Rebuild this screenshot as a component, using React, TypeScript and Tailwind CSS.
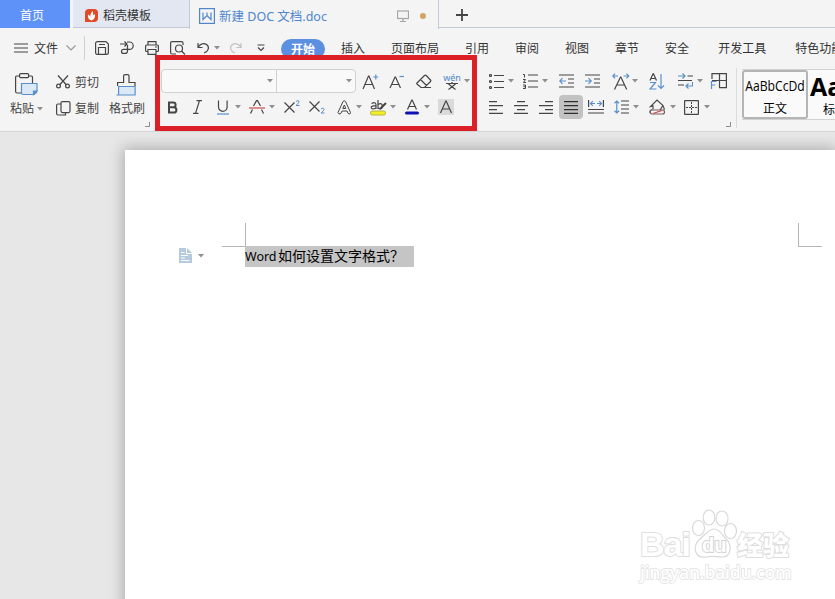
import React from "react";

interface IGlyph {
  w: number;
  h: number;
  className?: string;
  stroke?: string;
  children: React.ReactNode;
}

const BLUE = "#5b8fc9";

function Glyph({ w, h, className = "", stroke = "#454545", children }: IGlyph) {
  return (
    <svg
      width={w}
      height={h}
      viewBox={`0 0 ${w} ${h}`}
      fill="none"
      stroke={stroke}
      strokeWidth={1.2}
      className={"shrink-0 " + className}
    >
      {children}
    </svg>
  );
}

function Caret({ className = "" }: { className?: string }) {
  return (
    <svg width="6" height="4" viewBox="0 0 6 4" className={"shrink-0 -mr-px " + className}>
      <path d="M0 0h6L3 3.500z" fill="#8f8f8f" />
    </svg>
  );
}

function Launcher({ className = "" }: { className?: string }) {
  return (
    <Glyph w={5} h={5} className={className} stroke="#8c8c8c">
      <path d="M4.5 0v4.5H0" strokeWidth="1" />
    </Glyph>
  );
}

const menus = [
  { name: "插入", cls: "ml-4" },
  { name: "页面布局", cls: "ml-[26px]" },
  { name: "引用", cls: "ml-[26px]" },
  { name: "审阅", cls: "ml-[26px]" },
  { name: "视图", cls: "ml-[26px]" },
  { name: "章节", cls: "ml-[26px]" },
  { name: "安全", cls: "ml-[26px]" },
  { name: "开发工具", cls: "ml-[29px]" },
  { name: "特色功能", cls: "ml-[29px]" },
];

function TabBar() {
  return (
    <div className="flex h-[29px] bg-[#f4f4f4]">
      <div className="w-[70px] h-[28px] pr-[6px] pt-[3px] bg-[#5f92f8] text-white flex items-center justify-center">首页</div>
      <div className="w-[116px] h-[28px] ml-[3px] pl-[11px] pt-[3px] bg-[#e3e7f1] border-b border-[#c3c9d6] flex items-center">
        <svg width="15" height="15" viewBox="0 0 15 15">
          <path d="M5 1h5q4 0 4 4v5q0 4-4 4H1V5q0-4 4-4z" fill="#e04a24" />
          <path d="M7.6 12.5C4 11.5 3.8 9 4 6.5c1.2.6 2 1.3 2.2 2.2C6.4 6.5 7 4.4 8.8 3c.5 2 .4 3.300-.1 4.700.6-.8 1.200-1.200 2.300-1.500.2 3-.4 5.200-3.400 6.300z" fill="#fff" />
        </svg>
        <span className="ml-[4px] pt-[2px] text-[#333]">稻壳模板</span>
      </div>
      <div className="w-[250px] h-[29px] pl-[10px] pt-[3px] border-l border-r border-[#c3c9d6] flex items-center text-[#4f86cc]">
        <Glyph w={16} h={16} stroke="#4f86cc" className="-ml-px">
          <rect x=".6" y=".6" width="14.8" height="14.800" />
          <path d="M4 4.500v7l4-4 4 4v-7M8 4.500v3" />
        </Glyph>
        <span className="ml-[4px] pt-px w-[110px] whitespace-nowrap text-[12.500px]">新建 DOC 文档.doc</span>
        <Glyph w={12} h={12} stroke="#a6a6a6" className="ml-[68px]">
          <rect x=".5" y="1" width="11" height="7.500" />
          <path d="M6 8.500v3M3 11.500h6" />
        </Glyph>
        <i className="ml-[11px] size-[6px] rounded-full bg-[#d3a463]" />
      </div>
      <div className="flex-1 h-[28px] pl-[17px] pt-[3px] border-b border-[#c3c9d6] flex items-center">
        <Glyph w={12} h={12}>
          <path d="M6 0v12M0 6h12" strokeWidth="1.800" />
        </Glyph>
      </div>
    </div>
  );
}

function MenuBar() {
  return (
    <div className="flex h-[38px] items-center pl-[14px] whitespace-nowrap text-[#333]">
      <Glyph w={14} h={10}>
        <path d="M0 1h14M0 5h14M0 9h14" />
      </Glyph>
      <span className="ml-[6px] pt-[2px]">文件</span>
      <Glyph w={10} h={6} className="ml-[8px]" stroke="#999">
        <path d="M.5 .5L5 5 9.500 .5" />
      </Glyph>
      <i className="ml-[8px] w-px h-[24px] shrink-0 bg-[#cfcfcf]" />
      {/* save, export, print, preview */}
      <Glyph w={14} h={14} className="ml-[10px]">
        <path d="M2.500 .6h8.500l2.400 2.400v8.500q0 1.900-1.900 1.900h-9Q.6 13.400 .6 11.500v-9Q.6.6 2.500.6zM3.500 13V6.500h7V13M4 3.500h6" />
      </Glyph>
      <Glyph w={14} h={14} className="ml-[11px]">
        <path d="M0 3h7M4.500 .5L7 3 4.500 5.500M7 1h2.500a3.700 3.700 0 0 1 0 7.400H3.500a1.500 1.500 0 0 0 0 4H5q2.500 0 2.500-2.500V4" />
      </Glyph>
      <Glyph w={14} h={14} className="ml-[11px]">
        <path d="M3 4V.6h8V4M3 10.500H1.500Q.6 10.500 .6 9.500V5q0-1 1-1h10.800q1 0 1 1v4.500q0 1-1 1H11M3 8.500h8v4.900H3zM10 6h2" />
      </Glyph>
      <Glyph w={16} h={14} className="ml-[11px]">
        <path d="M6 13H2Q.6 13 .6 11.500V2Q.6.6 2 .6h9.500Q13 .6 13 2v2M11.500 10l3.500 3.500" />
        <circle cx="9" cy="7.500" r="3.500" />
      </Glyph>
      <Glyph w={13} h={12} className="ml-[11px]">
        <path d="M1 1v4.500h4.500M1 5.500C3.500 1.500 7 1 9.500 2.500c3.500 2.500 2 7-2.500 8.500" />
      </Glyph>
      <Caret className="ml-[4px]" />
      <Glyph w={13} h={12} className="ml-[10px]" stroke="#c2c2c2">
        <path d="M12 1v4.500H7.500M12 5.500C9.500 1.500 6 1 3.500 2.500 0 5 1.500 9.500 6 11" />
      </Glyph>
      <Glyph w={8} h={8} className="ml-[15px]">
        <path d="M.5 1h7M1 3.500l3 3 3-3" />
      </Glyph>
      <span className="ml-[16px] mt-[2px] w-[44px] h-[20px] pt-px shrink-0 rounded-full bg-[#5b8fe0] text-white font-bold flex items-center justify-center">
        开始
      </span>
      {menus.map((item) => {
        return (
          <span key={item.name} className={item.cls + " pt-[2px] shrink-0"}>
            {item.name}
          </span>
        );
      })}
    </div>
  );
}

function Clipboard() {
  return (
    <div className="flex w-[161px] h-[65px] pl-[10px] text-[#444]">
      <div className="w-[34px]">
        <Glyph w={23} h={23} className="ml-[5px] mt-[6px]">
          <path d="M5 3H1.500q-.9 0-.9 1v14.500q0 1.500 1.500 1.500H6M13 3h3.500q1 0 1 1v6" />
          <rect x="4.600" y=".6" width="9" height="4" rx="1" />
          <path d="M6.500 10.500H22V18q-1 3-4 3.500H8q-1.500 0-1.500-1.500z" fill="#dbe8f6" stroke={BLUE} />
          <path d="M22 18h-3.500v3.500z" fill={BLUE} stroke={BLUE} />
        </Glyph>
        <div className="mt-[4px] h-[18px] flex items-center whitespace-nowrap">
          粘贴 <Caret className="ml-[3px]" />
        </div>
      </div>
      <div className="w-[44px] ml-[12px]">
        <div className="flex h-[26px] items-center mt-[2px]">
          <Glyph w={14} h={14}>
            <path d="M2 .5L10.500 10M12 .5L3.500 10" />
            <circle cx="2.500" cy="11" r="1.900" />
            <circle cx="11.500" cy="11" r="1.900" />
          </Glyph>
          <span className="ml-[5px] pt-px">剪切</span>
        </div>
        <div className="flex h-[26px] items-center">
          <Glyph w={15} h={15}>
            <rect x="5" y=".6" width="9" height="11" rx="1.500" />
            <path d="M5 3H2Q.6 3 .6 4.500v8Q.6 14 2 14h7.500v-2.500" />
          </Glyph>
          <span className="ml-[4px] pt-px">复制</span>
        </div>
      </div>
      <div className="w-[37px] ml-[9px]">
        <Glyph w={21} h={22} className="ml-[7px] mt-[7px]">
          <path d="M1.600 12V8.500h6V2q0-1.400 1.400-1.400h2.600Q13 .6 13 2v6.500h6V12" />
          <path d="M2.600 12.500h16.500V21H.5h2.100z" fill="#dbe8f6" stroke={BLUE} />
        </Glyph>
        <div className="mt-[4px] h-[18px] flex items-center whitespace-nowrap">格式刷</div>
      </div>
      <Launcher className="mt-[55px] -ml-px" />
    </div>
  );
}

function FontGroup() {
  return (
    <div className="w-[328px] h-[65px] pt-px">
      <div className="flex h-[26px] items-center">
        <div className="flex w-[195px] h-[24px] rounded-[4px] border border-[#d0d0d0] bg-[#f9f9f9]">
          <div className="flex w-[115px] items-center justify-end pr-[4px] border-r border-[#d0d0d0]">
            <Caret />
          </div>
          <div className="flex flex-1 items-center justify-end pr-[4px]">
            <Caret />
          </div>
        </div>
        <Glyph w={17} h={17} className="ml-[6px]">
          <path d="M1 16L6.500 3h.5l5.500 13M3 11.500h7.500" />
          <path d="M13.800 1.500v5M11.300 4h5" stroke={BLUE} />
        </Glyph>
        <Glyph w={16} h={15} className="ml-[10px]">
          <path d="M1 14L6 3h.5l5 11M2.500 10.500H9.500" />
          <path d="M10.500 2.500H15" stroke={BLUE} />
        </Glyph>
        <Glyph w={16} h={15} className="ml-[11px]">
          <path d="M1 9L8.500 1.500Q9.300 .7 10.200 1.500L14.500 6q.7.8 0 1.500L8.500 13.500H5L1 10q-.5-.5 0-1zM4.500 5.500l6 6M5 13.500h10" />
        </Glyph>
        <div className="ml-[11px] mt-px w-[18px] flex flex-col items-center">
          <span className="text-[9px] leading-[7px] text-[#4f86c4]">wén</span>
          <Glyph w={12} h={8} className="mt-px">
            <path d="M0 1.500h12M6 0v1.500M2.500 2l7 5.500M9.500 2l-7 5.500" />
          </Glyph>
        </div>
        <Caret className="ml-[3px]" />
      </div>
      <div className="flex h-[26px] items-center pl-[6px]">
        <Glyph w={11} h={13}>
          <path d="M2 1.500h4.200a2.400 2.400 0 0 1 0 4.800H2zM2 6.300h4.800a2.600 2.600 0 0 1 0 5.200H2z" strokeWidth="2" />
        </Glyph>
        <Glyph w={9} h={14} className="ml-[15px]">
          <path d="M3.500 .6H9M0 13.400h5.500M6.500 .6l-4 12.800" />
        </Glyph>
        <Glyph w={12} h={15} className="ml-[15px]">
          <path d="M1.500 .5v6.500a4.300 4.300 0 0 0 8.600 0V.5" />
          <path d="M0 14h12" stroke={BLUE} />
        </Glyph>
        <Caret className="ml-[6px]" />
        <Glyph w={16} h={14} className="ml-[9px]">
          <path d="M4.500 6L7.500 .6h1L11.500 6M3.500 9.500l-2 4M12.500 9.500l2 4" />
          <path d="M0 8h16" stroke="#c94a4a" />
        </Glyph>
        <Caret className="ml-[4px]" />
        <Glyph w={16} h={14} className="ml-[10px]">
          <path d="M.5 2.500l10 10M10.500 2.500l-10 10" />
          <path d="M12 1.500q3-2 3 .5 0 1-3 3.500h3.500" stroke={BLUE} strokeWidth="1" />
        </Glyph>
        <Glyph w={16} h={14} className="ml-[9px]">
          <path d="M.5 1.500l10 10M10.500 1.500l-10 10" />
          <path d="M12 9q3-2 3 .5 0 1-3 3.500h3.500" stroke={BLUE} strokeWidth="1" />
        </Glyph>
        <Glyph w={15} h={15} className="ml-[12px]">
          <path d="M1 12.500L6 1.500q1.200-1.500 2.500 0l5 11q.2 1.500-1.500 1.500-1 0-2-3H5q-1 3-2 3-2 0-2-1.500zM5.800 8.500h3L7.300 5z" strokeWidth="1" />
        </Glyph>
        <Caret className="ml-[4px]" />
        <Glyph w={17} h={17} className="ml-[9px]">
          <rect x=".5" y="12" width="15" height="4" rx="1.800" fill="#f4ee28" stroke="#a8a432" strokeWidth=".8" />
          <path d="M1.500 4.500q4-2 4.500 1V10M6 7Q1.200 6.500 1.200 8.500 1.500 11 6 9M8 1v9M8 6q2-2.500 4-.5 1.500 4-2 4.500L8 9" />
          <path d="M16 4l-5 5-1.500 1" strokeWidth="2" />
        </Glyph>
        <Caret className="ml-[3px]" />
        <Glyph w={14} h={16} className="ml-[10px]">
          <path d="M2.500 10.500L6.800 1h.4l4.300 9.500M4 7.500h6" />
          <rect x="0" y="12.500" width="14" height="3" rx="1.500" fill="#1212b4" stroke="none" />
        </Glyph>
        <Caret className="ml-[5px]" />
        <Glyph w={16} h={16} className="ml-[9px] bg-[#dadada]">
          <path d="M2.500 14L7.800 2h.4l5.300 12M4.500 10h7" />
        </Glyph>
      </div>
    </div>
  );
}

function ParagraphGroup() {
  return (
    <div className="w-[247px] h-[65px] pt-px">
      <div className="flex h-[26px] items-center">
        <Glyph w={15} h={15}>
          <path d="M5 1.500h10M5 7.500h10M5 13.500h10" />
          <circle cx="1.500" cy="1.500" r="1" />
          <circle cx="1.500" cy="7.500" r="1" />
          <circle cx="1.500" cy="13.500" r="1" />
        </Glyph>
        <Caret className="ml-[4px]" />
        <Glyph w={15} h={16} className="ml-[10px]">
          <path d="M5 2h10M5 8h10M5 14h10" />
          <path d="M0 1.500h1.500v3M0 6.500h2.500L.5 9.500h2.500M0 12h2.500v3.500H0M.5 13.700h2" strokeWidth="1" />
        </Glyph>
        <Caret className="ml-[4px]" />
        <Glyph w={15} h={14} className="ml-[12px]">
          <path d="M0 1h15M9 5h6M9 9h6M0 13h15" />
          <path d="M.8 7H7M3.500 4.200L.8 7l2.700 2.800" stroke={BLUE} />
        </Glyph>
        <Glyph w={15} h={14} className="ml-[11px]">
          <path d="M0 1h15M9 5h6M9 9h6M0 13h15" />
          <path d="M0 7h6.200M3.500 4.200L6.200 7 3.500 9.800" stroke={BLUE} />
        </Glyph>
        <Glyph w={18} h={17} className="ml-[12px]">
          <path d="M2.500 16.500L8.500 4h.4l5.800 12.500M5 12h7.500" />
          <path d="M.8 3H6M3 .6L.8 3 3 5.400M11.500 3h5.200M14.500 .6L16.700 3l-2.200 2.400" stroke={BLUE} />
        </Glyph>
        <Caret className="ml-[2px]" />
        <Glyph w={16} h={17} className="ml-[12px]">
          <path d="M1 7.500L4 .8h.5l3 6.700M2 5.500h4.500" />
          <path d="M1 9.500h5.500L1 16h6.500M12 1v14.500M9 12.500l3 3 3-3" stroke={BLUE} />
        </Glyph>
        <Glyph w={15} h={16} className="ml-[13px]">
          <path d="M9.500 3H15M0 7.500h14M0 12h6" />
          <path d="M0 3h7M4.500 .5L7 3 4.500 5.500M14.500 9v4H8M10.500 10.500L8 13l2.500 2.500" stroke={BLUE} />
        </Glyph>
        <Caret className="ml-[4px]" />
        <Glyph w={17} h={16} className="ml-[8px]">
          <path d="M2 6V.6h14.400v14H9M9.500 .6v14M2 7.500h14.400" />
          <path d="M6.500 8.500h-5V16M1.500 12h4" stroke={BLUE} />
        </Glyph>
      </div>
      <div className="flex h-[26px] items-center">
        <Glyph w={14} h={13}>
          <path d="M0 .6h8M0 4.600h14M0 8.600h8M0 12.400h14" />
        </Glyph>
        <Glyph w={14} h={13} className="ml-[11px]">
          <path d="M3 .6h8M0 4.600h14M3 8.600h8M0 12.400h14" />
        </Glyph>
        <Glyph w={14} h={13} className="ml-[11px]">
          <path d="M6 .6h8M0 4.600h14M6 8.600h8M0 12.400h14" />
        </Glyph>
        <div className="ml-[6px] w-[24px] h-[24px] rounded-[4px] bg-[#c2c2c2] flex items-center justify-center">
          <Glyph w={14} h={13} stroke="#2e2e2e">
            <path d="M0 .6h14M0 4.600h14M0 8.600h14M0 12.400h14" />
          </Glyph>
        </div>
        <Glyph w={16} h={14} className="ml-[5px]">
          <path d="M.6 0v7M15.400 0v7M0 9.500h16M0 13h16" />
          <path d="M2.500 3.500h4.500M4.800 1.200L2.500 3.500l2.300 2.300M9 3.500h4.500M11.200 1.200l2.300 2.300-2.300 2.300" stroke={BLUE} />
        </Glyph>
        <Glyph w={15} h={14} className="ml-[10px]">
          <path d="M7 1h8M7 5h8M7 9h8M7 13h8" />
          <path d="M2.800 1v12M.5 3.200L2.800 1l2.300 2.200M.5 10.800L2.800 13l2.300-2.200" stroke={BLUE} />
        </Glyph>
        <Caret className="ml-[4px]" />
        <Glyph w={17} h={16} className="ml-[11px]">
          <path d="M4 10.500V7L1.500 7.500 8 1l6 5.500-3 4.500M2.500 10.500Q.5 12 1.500 14M14 7q1.500 2 1 4" />
          <rect x="1" y="11" width="14.500" height="4" rx="2" stroke="#7a5c5c" />
          <path d="M4 14.500l9-3" stroke="#c94a4a" />
        </Glyph>
        <Caret className="ml-[4px]" />
        <Glyph w={15} h={15} className="ml-[9px]">
          <rect x=".6" y=".6" width="13.800" height="13.800" rx=".5" />
          <path d="M7.500 2v11M2 7.500h11" strokeWidth="1" strokeDasharray="2 1" />
        </Glyph>
        <Caret className="ml-[5px]" />
      </div>
      <Launcher className="ml-[237px] mt-[2px]" />
    </div>
  );
}

function StyleGallery() {
  return (
    <div className="flex flex-1 min-w-0 pt-px">
      <div className="flex w-[93px] h-[51px] mt-px ml-[5px] shrink-0 border-y border-[#d2d2d2] bg-[#fafafa] text-black">
        <div className="w-[66px] h-[49px] shrink-0 rounded-[3px] border-2 border-[#b5b5b5] text-center whitespace-nowrap">
          <div className="mt-[5px] -mx-2 text-[14px] leading-[18px] font-['Open_Sans'] scale-x-[.87]">AaBbCcDd</div>
          <div className="mt-[6px] leading-[16px]">正文</div>
        </div>
        <div className="ml-[2px] w-[25px] shrink-0 overflow-hidden whitespace-nowrap">
          <div className="text-[25px] font-bold leading-[32px] font-['Open_Sans']">Aa</div>
          <div className="ml-[13px] leading-[16px]">标</div>
        </div>
      </div>
    </div>
  );
}

function Watermark() {
  return (
    <div className="absolute left-[640px] top-[377px] w-[156px] text-white [paint-order:stroke]">
      <div className="flex h-[51px] items-end">
        <span className="w-[50px] text-[34px] leading-[32px] font-bold tracking-[-1px] [-webkit-text-stroke:2px_#dedede] font-['Liberation_Sans']">Bai</span>
        <div className="relative w-[47px] h-[51px]">
          <Glyph w={47} h={50} stroke="#d9d9d9">
            <ellipse cx="8.500" cy="19" rx="6" ry="7.500" />
            <ellipse cx="19" cy="8.500" rx="5.800" ry="7.500" />
            <ellipse cx="32" cy="9.500" rx="6" ry="7.500" />
            <ellipse cx="40.500" cy="22" rx="6" ry="7.500" />
            <path d="M24 20c6 0 8 6 12 10 6 5 6 18-4 18-5 0-11-1.500-16 0-11 1.500-14-10-7-17 5-4 9-11 15-11z" />
          </Glyph>
          <span className="absolute left-[12px] top-[24px] text-[20px] leading-[24px] font-bold [-webkit-text-stroke:2px_#d4d4d4] font-['Liberation_Sans']">du</span>
        </div>
        <span className="mb-[2px] text-[26px] leading-[26px] font-black whitespace-nowrap [-webkit-text-stroke:2px_#dedede]">经验</span>
      </div>
      <div className="text-[17.500px] leading-[20px] mt-[2px] font-semibold [-webkit-text-stroke:1.500px_#dfdfdf] font-['Open_Sans'] tracking-[-0.2px]">jingyan.baidu.com</div>
    </div>
  );
}

function DocumentArea() {
  return (
    <div className="relative flex-1 overflow-hidden bg-[#e7e7e7] border-t border-[#d5d5d5] pt-[18px] pl-[125px]">
      <div className="h-[460px] bg-white shadow-[0_0_14px_2px_rgba(0,0,0,0.26)]">
        <div className="flex pt-[73px] pl-[97px]">
          <i className="w-[24px] h-[24px] border-r border-b border-[#b5b5b5]" />
          <i className="ml-[552px] w-[24px] h-[24px] border-l border-b border-[#b5b5b5]" />
        </div>
        <div className="flex items-center -mt-px pl-[54px] h-[21px]">
          <svg width="13" height="15" viewBox="0 0 13 15" className="-mt-[2px]">
            <path d="M0 0h8l5 5v10H0z" fill="#b5c9df" />
            <path d="M7.500 0v5.500H13M2 4.500h3.500M2 7.500h7M2 10h4M2 12.500h8.500" stroke="#fff" fill="none" />
          </svg>
          <Caret className="ml-[6px] -mt-[2px]" />
          <div className="ml-[42px] w-[169px] h-[21px] bg-[#c5c5c5] text-black flex items-center whitespace-nowrap">
            <span className="w-[33px] text-[12.500px]">Word</span>
            <span className="text-[14px] -mt-px">如何设置文字格式？</span>
          </div>
        </div>
      </div>
      <Watermark />
    </div>
  );
}

function App() {
  return (
    <div className="relative flex flex-col w-[835px] h-[599px] overflow-hidden bg-[#f4f4f4] text-[12px] leading-[18px] font-['Noto_Sans','Noto_Sans_CJK_SC',sans-serif]">
      <TabBar />
      <MenuBar />
      <div className="flex h-[64px]">
        <Clipboard />
        <FontGroup />
        <ParagraphGroup />
        <i className="w-px h-[60px] mt-px bg-[#dcdcdc]" />
        <StyleGallery />
      </div>
      <DocumentArea />
      {/* highlight frame over the font tools */}
      <div className="absolute left-[155px] top-[55px] w-[322px] h-[76px] border-[5px] border-[#dc2027]" />
    </div>
  );
}

export default App;
